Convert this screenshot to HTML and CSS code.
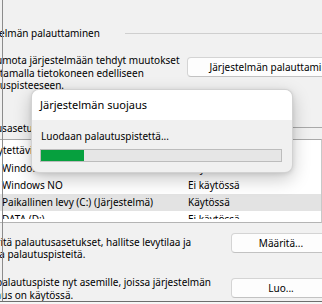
FILE: index.html
```html
<!DOCTYPE html>
<html lang="fi">
<head>
<meta charset="utf-8">
<link rel="stylesheet" href="styles.css">
</head>
<body>
<div class="frame">
  <div class="content">
    <div class="group-head g1"><span class="gh-text">Järjestelmän palauttaminen</span><span class="gh-line"></span></div>
    <div class="row r1">
      <p class="desc">Voit kumota järjestelmään tehdyt muutokset<br>palauttamalla tietokoneen edelliseen<br>palautuspisteeseen.</p>
      <button class="btn btn-wide">Järjestelmän palauttaminen...</button>
    </div>
    <div class="group-head g2"><span class="gh-text">Suojausasetukset</span><span class="gh-line"></span></div>
    <div class="list">
      <div class="list-head"><span class="c1">Käytettävissä olevat asemat</span><span class="c2">Suojaus</span></div>
      <div class="list-body">
        <div class="item"><span class="c1">Windows</span><span class="c2">Käytössä</span></div>
        <div class="item"><span class="c1">Windows NO</span><span class="c2">Ei käytössä</span></div>
        <div class="item sel"><span class="c1">Paikallinen levy (C:) (Järjestelmä)</span><span class="c2">Käytössä</span></div>
        <div class="item"><span class="c1">DATA (D:)</span><span class="c2">Ei käytössä</span></div>
      </div>
    </div>
    <div class="row r2">
      <p class="desc low">Määritä palautusasetukset, hallitse levytilaa ja<br>poista palautuspisteitä.</p>
      <button class="btn btn-small">Määritä...</button>
    </div>
    <div class="row r3">
      <p class="desc low">Luo palautuspiste nyt asemille, joissa järjestelmän<br>suojaus on käytössä.</p>
      <button class="btn btn-small">Luo...</button>
    </div>
  </div>
  <div class="dialog">
    <div class="dlg-title">Järjestelmän suojaus</div>
    <div class="dlg-body">
      <div class="dlg-text">Luodaan palautuspistettä...</div>
      <div class="progress"><div class="progress-fill"></div></div>
    </div>
  </div>
</div>
</body>
</html>
```
FILE: styles.css
```css
html, body {
  margin: 0;
  padding: 0;
}
body {
  width: 322px;
  height: 304px;
  overflow: hidden;
  background: #f6f6f6;
  font-family: "Noto Sans", "Open Sans", sans-serif;
  font-size: 10px;
  color: #000;
}
.frame {
  position: relative;
  width: 322px;
  height: 301px;
  overflow: hidden;
  background: #f1f1f1;
  border-bottom: 1px solid #6e6e6e;
}
.frame::before {
  content: "";
  position: absolute;
  left: 2px;
  top: 0;
  bottom: 0;
  width: 1px;
  background: #8c8c8c;
  z-index: 3;
}
.content {
  margin-left: -30px;
  padding-top: 26px;
  width: 400px;
}
.group-head {
  display: flex;
  align-items: center;
  height: 14px;
  line-height: 14px;
}
.gh-text {
  white-space: nowrap;
}
.g1 .gh-text { width: 155px; }
.g2 .gh-text { width: 110px; }
.gh-line {
  flex: 1;
  height: 1px;
  background: #cfcfcf;
}
.g2 .gh-line { background: #a9a9a9; }
.g2 { margin-top: 29px; }
.row {
  display: flex;
  align-items: flex-start;
}
.desc {
  margin: 0;
  line-height: 12.5px;
  white-space: nowrap;
}
.r1 { margin-top: 14px; }
.r1 .desc { width: 218px; }
.r1 .btn { margin-top: 3px; }
.desc.low {
  margin-left: 6px;
  width: 255px;
}
.r2 { margin-top: 10px; }
.r2 .desc { padding-top: 3px; }
.r3 { margin-top: 17px; }
.r3 .desc { margin-top: -1.5px; }
.btn {
  box-sizing: border-box;
  height: 20px;
  padding: 0;
  font: inherit;
  color: #000;
  background: #fdfdfd;
  border: 1px solid #d4d4d4;
  border-bottom-color: #c2c2c2;
  border-radius: 4px;
  text-align: center;
  flex: none;
}
.btn-wide { width: 183px; }
.btn-small { width: 100px; }
.list {
  margin-top: 4px;
  margin-left: 8px;
  width: 343px;
  background: #fff;
  border-top: 1px solid #a9a9a9;
  border-bottom: 1px solid #b4b4b4;
  border-right: 1px solid #c8c8c8;
  padding-bottom: 3px;
}
.list-head, .item {
  display: grid;
  white-space: nowrap;
}
.list-head {
  height: 20px;
  line-height: 21px;
  padding-left: 8px;
  grid-template-columns: 202px 1fr;
}
.list-body {
  height: 59px;
  overflow: hidden;
}
.item {
  height: 17px;
  line-height: 17px;
  padding-left: 24px;
  grid-template-columns: 186px 1fr;
}
.item.sel {
  background: #e3e3e3;
}
.dialog {
  position: absolute;
  left: 31px;
  top: 89px;
  width: 262px;
  height: 84px;
  box-sizing: border-box;
  border: 1px solid rgba(0, 0, 0, 0.12);
  border-radius: 8px;
  overflow: hidden;
  background: #f0f0f0;
  box-shadow: 0 6px 18px rgba(0, 0, 0, 0.22), 0 1px 4px rgba(0, 0, 0, 0.1);
  z-index: 2;
}
.dlg-title {
  height: 30px;
  box-sizing: border-box;
  padding: 8px 0 0 8px;
  background: #ffffff;
  font-size: 11px;
  line-height: 14px;
}
.dlg-body {
  padding: 10px 0 0 8px;
}
.dlg-text {
  line-height: 13px;
  padding-left: 1px;
}
.progress {
  margin-top: 6px;
  width: 242px;
  height: 13px;
  box-sizing: border-box;
  border: 1px solid #bcbcbc;
  background: #e6e6e6;
}
.progress-fill {
  width: 43px;
  height: 100%;
  background: #06a03e;
}
```
